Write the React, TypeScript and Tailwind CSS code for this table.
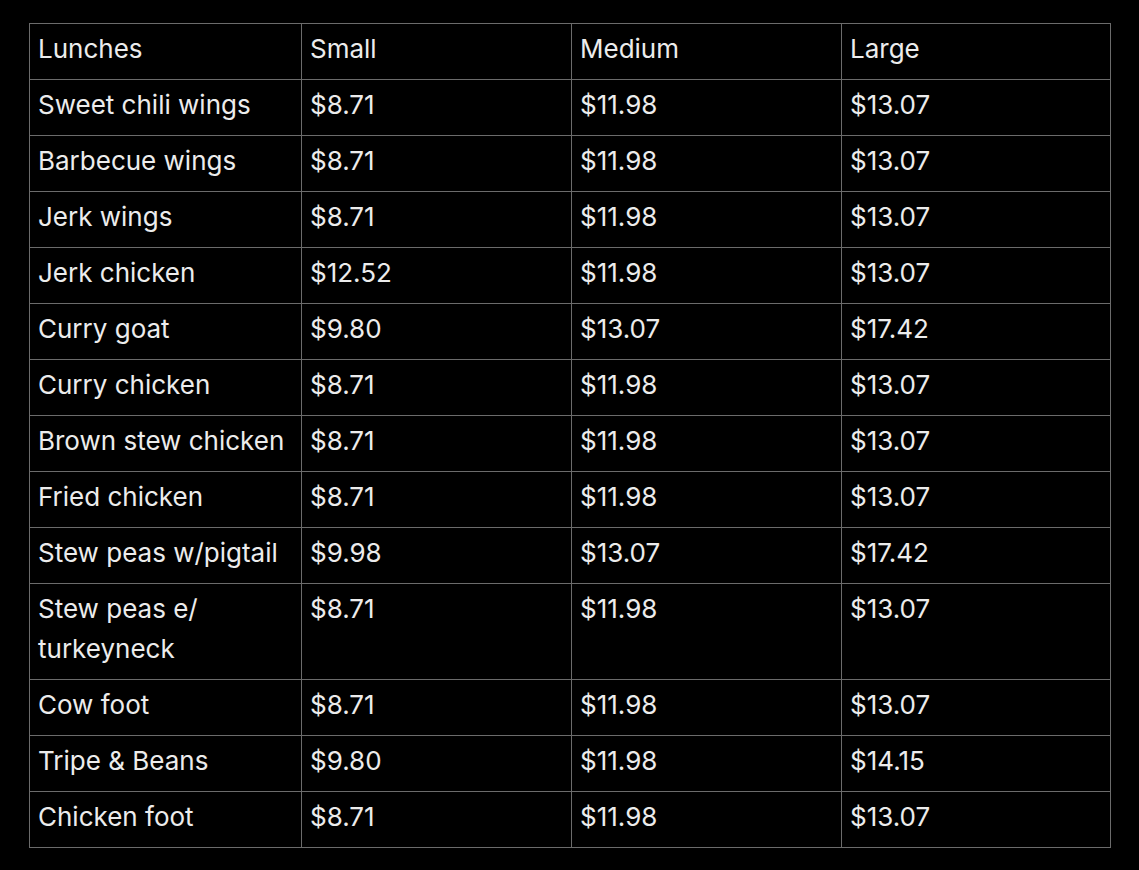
const rows: [string, string, string, string][] = [
  ["Sweet chili wings", "$8.71", "$11.98", "$13.07"],
  ["Barbecue wings", "$8.71", "$11.98", "$13.07"],
  ["Jerk wings", "$8.71", "$11.98", "$13.07"],
  ["Jerk chicken", "$12.52", "$11.98", "$13.07"],
  ["Curry goat", "$9.80", "$13.07", "$17.42"],
  ["Curry chicken", "$8.71", "$11.98", "$13.07"],
  ["Brown stew chicken", "$8.71", "$11.98", "$13.07"],
  ["Fried chicken", "$8.71", "$11.98", "$13.07"],
  ["Stew peas w/pigtail", "$9.98", "$13.07", "$17.42"],
  ["Stew peas e/ turkeyneck", "$8.71", "$11.98", "$13.07"],
  ["Cow foot", "$8.71", "$11.98", "$13.07"],
  ["Tripe & Beans", "$9.80", "$11.98", "$14.15"],
  ["Chicken foot", "$8.71", "$11.98", "$13.07"],
];

const cell =
  "border border-[#6b6b6b] pl-[8px] pr-[8px] pt-[5px] pb-[10px] align-top text-left font-normal";

export default function App() {
  return (
    <div className="min-h-[870px] w-full bg-black pl-[29px] pt-[23px] font-['Inter',sans-serif] text-[26px] leading-[40px] text-[#ececec]">
      <table className="w-[1082px] table-fixed border-collapse">
        <colgroup>
          <col className="w-[272px]" />
          <col className="w-[270px]" />
          <col className="w-[270px]" />
          <col />
        </colgroup>
        <thead>
          <tr>
            <th className={cell}>Lunches</th>
            <th className={cell}>Small</th>
            <th className={cell}>Medium</th>
            <th className={cell}>Large</th>
          </tr>
        </thead>
        <tbody>
          {rows.map((r) => (
            <tr key={r[0]}>
              {r.map((v, i) => (
                <td key={i} className={cell}>
                  {v}
                </td>
              ))}
            </tr>
          ))}
        </tbody>
      </table>
    </div>
  );
}
